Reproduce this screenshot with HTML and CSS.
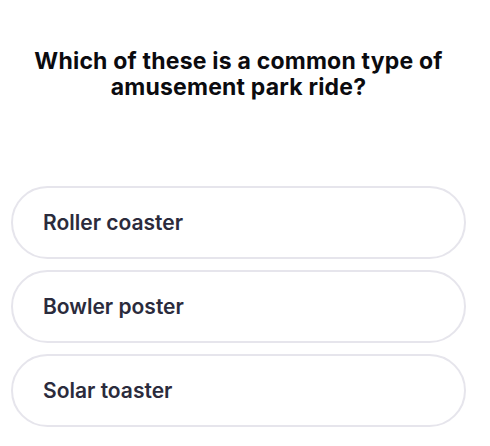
FILE: index.html
```html
<!DOCTYPE html>
<html>
<head>
<meta charset="utf-8">
<link rel="stylesheet" href="styles.css">
</head>
<body>
<div class="quiz">
  <h1 class="question">Which of these is a common type of amusement park ride?</h1>
  <div class="options">
    <button class="option">Roller coaster</button>
    <button class="option">Bowler poster</button>
    <button class="option">Solar toaster</button>
  </div>
</div>
</body>
</html>
```

FILE: styles.css
```css
* { box-sizing: border-box; }
html, body { margin: 0; padding: 0; background: #ffffff; }
body { font-family: "Inter", "Lato", "Liberation Sans", sans-serif; }
.quiz {
  width: 477px;
  padding: 48px 11px 0 11px;
  display: flex;
  flex-direction: column;
}
.question {
  margin: 0 auto;
  width: 455px;
  font-size: 23px;
  line-height: 26px;
  font-weight: 700;
  letter-spacing: 0.2px;
  color: #0b0b0f;
  text-align: center;
}
.options {
  margin-top: 86px;
  display: flex;
  flex-direction: column;
  gap: 11px;
}
.option {
  width: 455px;
  height: 73px;
  border: 2px solid #e6e5ec;
  border-radius: 37px;
  background: #ffffff;
  text-align: left;
  padding: 0 0 0 30px;
  font-family: inherit;
  font-size: 21px;
  font-weight: 600;
  color: #2b2b3c;
}
```
